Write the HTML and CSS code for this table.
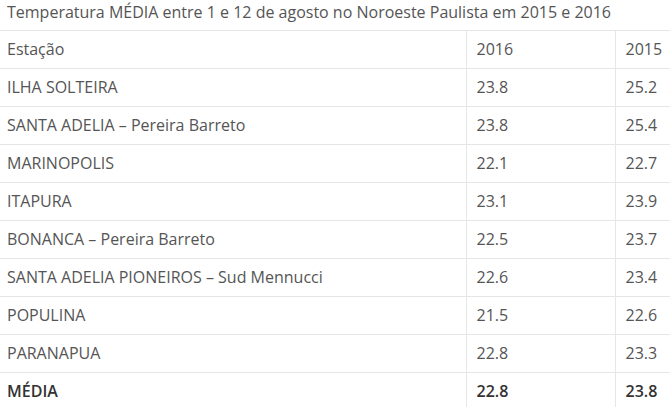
FILE: index.html
```html
<!DOCTYPE html>
<html lang="pt">
<head>
<meta charset="utf-8">
<title>Temperatura MÉDIA</title>
<link rel="stylesheet" href="styles.css">
</head>
<body>
<table class="temps">
  <caption class="temps-caption">Temperatura MÉDIA entre 1 e 12 de agosto no Noroeste Paulista em 2015 e 2016</caption>
  <colgroup>
    <col class="col-name">
    <col class="col-year">
    <col class="col-year-last">
  </colgroup>
  <tbody>
    <tr><td>Estação</td><td>2016</td><td>2015</td></tr>
    <tr><td>ILHA SOLTEIRA</td><td>23.8</td><td>25.2</td></tr>
    <tr><td>SANTA ADELIA – Pereira Barreto</td><td>23.8</td><td>25.4</td></tr>
    <tr><td>MARINOPOLIS</td><td>22.1</td><td>22.7</td></tr>
    <tr><td>ITAPURA</td><td>23.1</td><td>23.9</td></tr>
    <tr><td>BONANCA – Pereira Barreto</td><td>22.5</td><td>23.7</td></tr>
    <tr><td>SANTA ADELIA PIONEIROS – Sud Mennucci</td><td>22.6</td><td>23.4</td></tr>
    <tr><td>POPULINA</td><td>21.5</td><td>22.6</td></tr>
    <tr><td>PARANAPUA</td><td>22.8</td><td>23.3</td></tr>
    <tr class="total"><td>MÉDIA</td><td>22.8</td><td>23.8</td></tr>
  </tbody>
</table>
</body>
</html>
```
FILE: styles.css
```css
html, body {
  margin: 0;
  padding: 0;
  background: #ffffff;
  overflow: hidden;
}
body {
  font-family: "Open Sans", "Liberation Sans", sans-serif;
  font-size: 16px;
  line-height: 21px;
  color: #555555;
}
.temps {
  width: 670px;
  border-collapse: collapse;
  table-layout: fixed;
}
.temps-caption {
  text-align: left;
  padding: 2px 7px 7px;
  white-space: nowrap;
}
.col-name { width: 466px; }
.col-year { width: 149px; }
.temps td {
  padding: 8px 10px;
  border-top: 1px solid #e6e6e6;
  border-left: 1px solid #e6e6e6;
  white-space: nowrap;
  vertical-align: top;
}
.temps td:first-child {
  padding-left: 7px;
  border-left: none;
}
.total td {
  font-weight: 600;
  color: #333333;
}
```
